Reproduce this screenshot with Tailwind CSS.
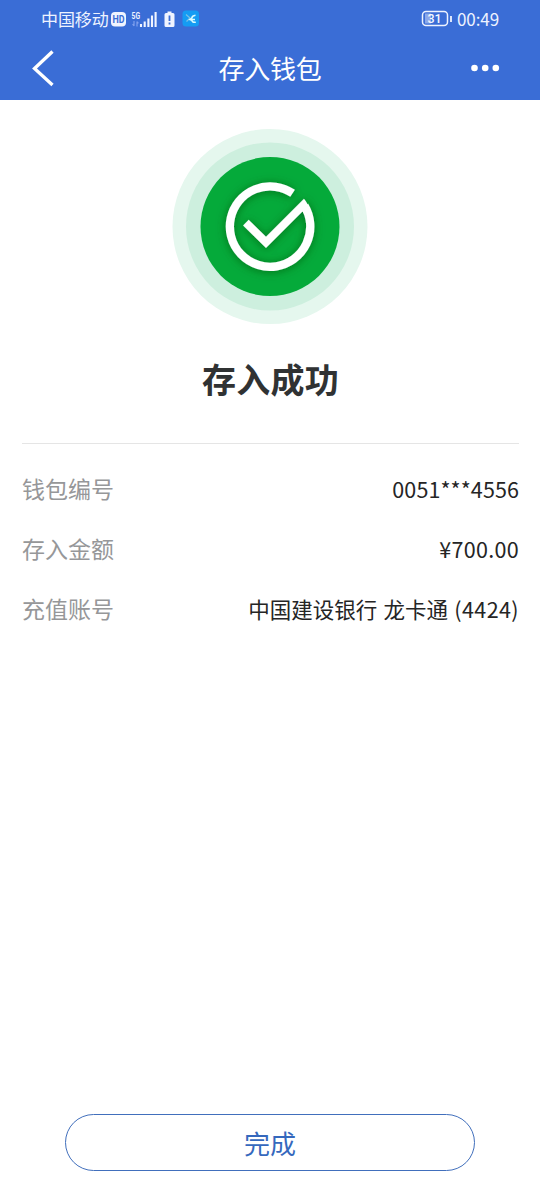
<!DOCTYPE html>
<html lang="zh-CN">
<head>
<meta charset="utf-8">
<title>存入钱包</title>
<script src="https://cdn.jsdelivr.net/npm/@tailwindcss/browser@4"></script>
</head>
<body class="bg-white font-['Noto_Sans_CJK_SC',sans-serif]">
<div class="flex h-[1200px] w-[540px] flex-col overflow-hidden bg-white">
  <header class="h-[100px] shrink-0 bg-[#3a6dd6] text-white">
    <div class="flex h-[37px] items-center pl-[41px] pr-10 text-[#eef3ff]">
      <span class="text-[17px] leading-[37px] tracking-[-0.1px]">中国移动</span>
      <svg class="ml-[2px] shrink-0" width="92" height="20" viewBox="111 8 92 20">
        <rect x="111" y="11" width="15" height="14.5" rx="4" fill="#f0f4ff"/>
        <text x="112.6" y="22" font-family="Roboto" font-size="10" font-weight="700" fill="#3a6dd6" textLength="12" lengthAdjust="spacingAndGlyphs">HD</text>
        <text x="131.6" y="17.5" font-family="Roboto" font-size="8.5" font-weight="700" fill="#eef3ff" textLength="8.5" lengthAdjust="spacingAndGlyphs">5G</text>
        <path d="M134 20v5M132.600 23.200l1.400 1.800M137 25.500v-5M137 20.500l1.400 1.800" stroke="#7f9fed" stroke-width="1.200" fill="none"/>
        <path d="M141 23v3M144.700 20.500V26M148.400 17.500V26M152 14.500V26M155.600 11V26" stroke="#f0f4ff" stroke-width="2.100"/>
        <path d="M167.500 10.500h4v1.500h1.500q1.500 0 1.500 1.500v11q0 1.500-1.500 1.500h-7q-1.500 0-1.500-1.500v-11q0-1.500 1.500-1.500h1.500z" fill="#f0f4ff"/>
        <path d="M169.500 14.500v5.500M169.500 21.500v2" stroke="#3a6dd6" stroke-width="1.800"/>
        <rect x="182.500" y="9.500" width="16.500" height="16" rx="3.500" fill="#159cf3"/>
        <path d="M186 13.500l4 3.500-3.500 3.500" stroke="#79bfe5" stroke-width="1.300" fill="none"/>
        <path d="M195.500 14.300q-3.300.5-3.700 2.700l-2 1.500 2 .8q.5 2.300 4 1.900M191.500 18.500h3.500" stroke="#d9fbff" stroke-width="1.500" fill="none"/>
      </svg>
      <svg class="ml-auto shrink-0" width="32" height="18" viewBox="421 10 32 18">
        <rect x="422.500" y="11.500" width="25" height="14" rx="3.500" fill="none" stroke="#eef3ff" stroke-width="1.500"/>
        <path d="M425 13.500h6v10h-6z" fill="#8ba8ea"/>
        <path d="M451 16v6" stroke="#eef3ff" stroke-width="1.800"/>
        <text x="427.500" y="23" font-family="Roboto" font-size="12.500" font-weight="500" fill="#f4f7ff" textLength="14">31</text>
      </svg>
      <span class="ml-1 w-[43px] whitespace-nowrap text-[17px] leading-[37px] tracking-[-0.1px]">00:49</span>
    </div>
    <div class="grid h-[61px] grid-cols-[1fr_auto_1fr] items-center">
      <svg class="ml-8" width="24" height="38" viewBox="0 0 24 38" fill="none" stroke="white" stroke-width="3.300"><path d="M20.500 2.500L2.500 19.500l18 16.500"/></svg>
      <h1 class="text-[26px] leading-[61px] tracking-[-0.2px]">存入钱包</h1>
      <svg class="mr-10 justify-self-end" width="30" height="8" viewBox="0 0 30 8" fill="white"><circle cx="4.500" cy="4" r="3.300"/><circle cx="15.200" cy="4" r="3.300"/><circle cx="25.800" cy="4" r="3.300"/></svg>
    </div>
  </header>
  <main class="flex flex-1 flex-col pl-[22px] pr-[21px]">
    <svg class="ml-[149px] mt-7 shrink-0" width="198" height="198" viewBox="171 128 198 198">
      <defs>
        <filter id="shade" x="-30%" y="-30%" width="160%" height="160%"><feDropShadow dx="0" dy="1" stdDeviation="5" flood-color="#004d16" flood-opacity=".6"/></filter>
      </defs>
      <circle cx="270" cy="226.500" r="97.500" fill="#e5f7ee"/>
      <circle cx="270" cy="226.500" r="84" fill="#cdefde"/>
      <circle cx="270" cy="226.500" r="69.500" fill="#05aa3a"/>
      <g filter="url(#shade)" fill="none" stroke="white" stroke-width="8.300">
        <path d="M292.600 193.300A40.200 40.200 0 1 0 304.600 206"/>
        <path d="M304 198.700L266 236.700L248.700 219.800L243.100 225.600L266 248L302.500 211.500L305 215L309.500 209Q307 202 304 198.700Z" fill="white" stroke="none"/>
      </g>
    </svg>
    <h2 class="mt-7 text-center text-[34px] font-bold leading-[50px] tracking-[0.2px] text-[#303233]">存入成功</h2>
    <dl class="mt-[39px] border-t border-[#e5e5e5] pt-[15px] text-[#252525]">
      <div class="flex h-[60px] items-center justify-between"><dt class="pb-0.5 text-[23px] text-[#969799]">钱包编号</dt><dd class="text-[21.5px] tracking-[0.1px]">0051***4556</dd></div>
      <div class="flex h-[60px] items-center justify-between"><dt class="pb-0.5 text-[23px] text-[#969799]">存入金额</dt><dd class="text-[21.5px] tracking-[0.3px]">¥700.00</dd></div>
      <div class="flex h-[60px] items-center justify-between"><dt class="pb-0.5 text-[23px] text-[#969799]">充值账号</dt><dd class="text-[21.5px] [word-spacing:1.5px]">中国建设银行 龙卡通 <span class="tracking-[0.4px]">(4424)</span></dd></div>
    </dl>
    <button class="ml-[43px] mr-[44px] mb-[29px] mt-auto h-[57px] rounded-full border border-[#416fbc] text-[26px] leading-none text-[#3568bd]">完成</button>
  </main>
</div>
</body>
</html>
